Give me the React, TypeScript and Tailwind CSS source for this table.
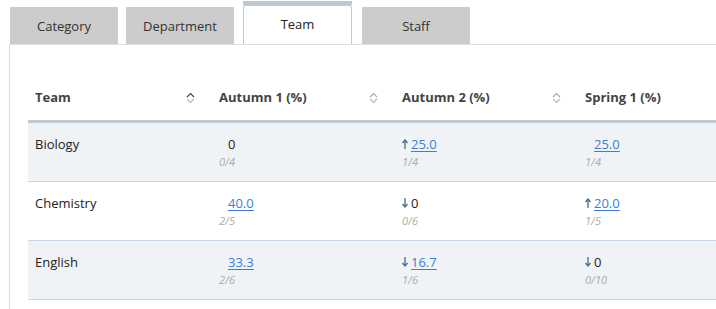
import React from "react";

type Cell = { value: string; sub: string; trend?: "up" | "down"; link: boolean };

const rows: { team: string; cells: Cell[] }[] = [
  {
    team: "Biology",
    cells: [
      { value: "0", sub: "0/4", link: false },
      { value: "25.0", sub: "1/4", trend: "up", link: true },
      { value: "25.0", sub: "1/4", link: true },
    ],
  },
  {
    team: "Chemistry",
    cells: [
      { value: "40.0", sub: "2/5", link: true },
      { value: "0", sub: "0/6", trend: "down", link: false },
      { value: "20.0", sub: "1/5", trend: "up", link: true },
    ],
  },
  {
    team: "English",
    cells: [
      { value: "33.3", sub: "2/6", link: true },
      { value: "16.7", sub: "1/6", trend: "down", link: true },
      { value: "0", sub: "0/10", trend: "down", link: false },
    ],
  },
];

const tabs = ["Category", "Department", "Team", "Staff"];

const SortIcon = ({ active }: { active?: boolean }) => (
  <svg width="9" height="12" viewBox="0 0 9 12" fill="none">
    <path d="M1 5 L4.5 1.5 L8 5" stroke={active ? "#444" : "#aaa"} strokeWidth="1.2" />
    <path d="M1 7 L4.5 10.5 L8 7" stroke="#bbb" strokeWidth="1.2" />
  </svg>
);

const Trend = ({ dir }: { dir?: "up" | "down" }) => (
  <span className="inline-block w-[9px]">
    {dir && (
      <svg width="6" height="10" viewBox="0 0 6 10" fill="none" className="block">
        {dir === "up" ? (
          <>
            <path d="M3 2 V10" stroke="#46698a" strokeWidth="1.3" />
            <path d="M0.5 4 L3 1 L5.5 4" stroke="#46698a" strokeWidth="1.3" />
          </>
        ) : (
          <>
            <path d="M3 0 V8" stroke="#46698a" strokeWidth="1.3" />
            <path d="M0.5 6 L3 9 L5.5 6" stroke="#46698a" strokeWidth="1.3" />
          </>
        )}
      </svg>
    )}
  </span>
);

export default function App() {
  return (
    <div className="w-[716px] h-[309px] overflow-hidden bg-white font-['Open_Sans',sans-serif] text-[13px] text-[#333] flex flex-col">
      {/* tabs */}
      <div className="flex items-end pl-[10px] h-[44px] shrink-0">
        {tabs.map((t, i) =>
          t === "Team" ? (
            <div key={t} className="ml-[9px] w-[109px] h-[43px] flex flex-col">
              <div className="h-[4px] bg-[#bcc7cf]" />
              <div className="flex-1 bg-white border border-b-0 border-[#c8c8c8] rounded-t-[3px] flex justify-center pt-[9px] text-[#222]">
                {t}
              </div>
            </div>
          ) : (
            <div
              key={t}
              className={`w-[108px] h-[37px] bg-[#cccccc] flex items-center justify-center pt-[2px] text-[#333] ${i === 0 ? "" : i === 3 ? "ml-[10px]" : "ml-[8px]"}`}
            >
              {t}
            </div>
          )
        )}
      </div>

      {/* panel */}
      <div className="flex-1 ml-[9px] border-t border-l border-[#dddddd] pl-[18px] pt-[30px]">
        <div className="w-[760px]">
          <div className="flex h-[48px] items-center border-b-[3px] border-[#bfc9d1] font-bold text-[#444]">
            <div className="w-[183px] flex items-center justify-between pl-[7px] pr-[16px]">
              <span>Team</span>
              <SortIcon active />
            </div>
            <div className="w-[183px] flex items-center justify-between pl-[8px] pr-[16px]">
              <span>Autumn 1 (%)</span>
              <SortIcon />
            </div>
            <div className="w-[183px] flex items-center justify-between pl-[8px] pr-[16px]">
              <span>Autumn 2 (%)</span>
              <SortIcon />
            </div>
            <div className="w-[183px] flex items-center pl-[8px]">
              <span>Spring 1 (%)</span>
            </div>
          </div>
          {rows.map((r, ri) => (
            <div
              key={r.team}
              className={`flex h-[59px] border-b border-[#c5d8ea] ${ri % 2 === 0 ? "bg-[#f0f3f6]" : "bg-white"}`}
            >
              <div className="w-[183px] pl-[7px] pt-[12px] leading-[18px] text-[#222]">{r.team}</div>
              {r.cells.map((c, ci) => (
                <div key={ci} className="w-[183px] pl-[8px] pt-[12px]">
                  <div className="flex items-center leading-[18px]">
                    <Trend dir={c.trend} />
                    {c.link ? (
                      <span className="text-[#3b7dd8] underline underline-offset-2">{c.value}</span>
                    ) : (
                      <span className="text-[#222]">{c.value}</span>
                    )}
                  </div>
                  <div className="italic text-[11px] text-[#aaaaaa] leading-[16px] mt-[1px]">{c.sub}</div>
                </div>
              ))}
            </div>
          ))}
        </div>
      </div>
    </div>
  );
}
